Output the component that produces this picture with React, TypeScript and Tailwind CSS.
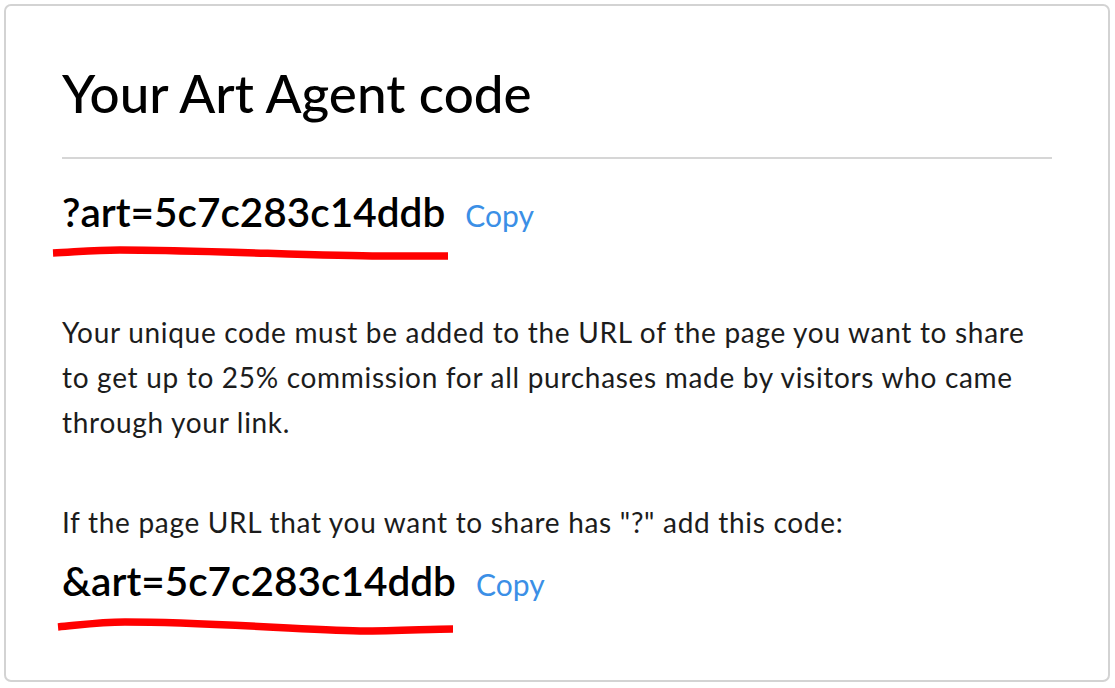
import React from 'react';

const Underline: React.FC<{ d: string }> = ({ d }) => (
  <svg
    className="absolute left-0 top-0 pointer-events-none"
    width="1115"
    height="90"
    viewBox="0 0 1115 90"
    fill="none"
  >
    <path d={d} stroke="#ff0000" strokeWidth="7.5" strokeLinecap="butt" strokeLinejoin="round" />
  </svg>
);

const CodeRow: React.FC<{ code: string; d: string }> = ({ code, d }) => (
  <div className="relative flex items-baseline gap-[20px]">
    <span className="text-[40.5px] leading-[50px] font-semibold text-black">{code}</span>
    <button className="text-[30px] leading-[50px] text-[#3b8fe6]">Copy</button>
    <div className="absolute -left-[62px] top-0 w-0 h-0">
      <Underline d={d} />
    </div>
  </div>
);

const App: React.FC = () => {
  return (
    <div className="min-h-screen bg-white p-[4px] pr-[5px]" style={{ fontFamily: 'Lato, "Open Sans", sans-serif' }}>
      <div className="h-[678px] rounded-[7px] border-2 border-[#d3d3d3] bg-white px-[56px] pt-[57px]">
        <h1 className="text-[53px] font-medium leading-[60px] text-black">Your Art Agent code</h1>
        <hr className="mt-[34px] border-0 border-t-2 border-[#d6d6d6]" />
        <div className="mt-[28px]">
          <CodeRow code="?art=5c7c283c14ddb" d="M53 66 C 75 65, 95 63, 120 63 C 200 63, 320 69, 380 69 C 410 69, 430 69, 448 69" />
        </div>
        <p className="mt-[70px] text-[28px] leading-[45px] tracking-[0.7px] text-[#1c1c1c]">
          Your unique code must be added to the URL of the page you want to share to get up to 25% commission for all purchases made by visitors who came through your link.
        </p>
        <p className="mt-[55px] text-[28px] leading-[45px] tracking-[0.7px] text-[#1c1c1c]">
          If the page URL that you want to share has "?" add this code:
        </p>
        <div className="mt-[11px]">
          <CodeRow code="&art=5c7c283c14ddb" d="M58 71 C 80 69, 100 66, 125 66 C 210 66, 300 74, 360 75 C 400 75, 430 73, 453 73" />
        </div>
      </div>
    </div>
  );
};

export default App;
